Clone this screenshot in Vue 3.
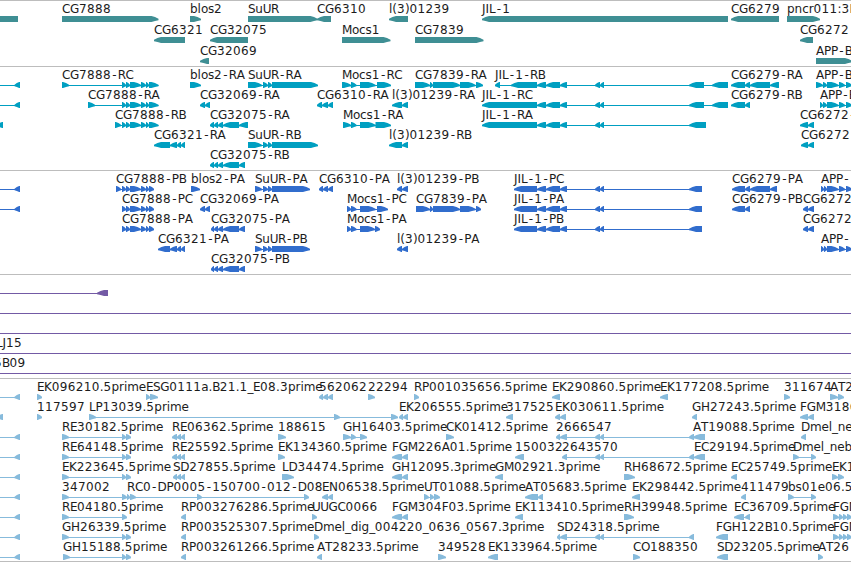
<script setup>
// glyph advances of the label font, digits are 8px
const advances = {
  A: 8, B: 7.5, C: 8, D: 9, E: 7, F: 6.7, G: 9, H: 9, I: 3.5, J: 3.5, K: 7.7, L: 6.5, M: 10,
  N: 9, O: 9, P: 7, R: 7.9, S: 7.2, T: 7.2, U: 8.3,
  a: 7.2, b: 7.6, c: 6.5, d: 7.6, e: 7.3, g: 7.6, i: 3.3, l: 3.3, m: 11.5, n: 7.6, o: 7.1,
  p: 7.6, r: 4.9, s: 6.1, u: 7.5,
  '-': 6.7, '.': 3.8, '_': 5.6, ':': 4, '(': 4.6, ')': 4.6
}

// shared exon blocks
const cg7888 = [[122, 126], [126, 130], [130, 141], [141, 146], [146, 149]]
const jil = [[537, 546], [546, 560], [560, 567], [595, 600], [600, 604]]
const cg32075 = [[214, 218], [218, 223], [223, 239]]
const cg6321 = [[170, 177], [177, 181], [181, 185]]
const suur = [[263, 268], [268, 272]]
const app = [[827, 838.5], [839, 845], [846, 852]]
const re = [[62, 69], [122, 126], [126, 131]]
const fgm = [[833, 839], [839, 843], [843, 847], [847, 852]]
const edge = ['', '<', [[-20, -10], [14.5, 20]]]
const tip = ['', '<', [[-3, 3]]]
const through = ['', '<', [[-20, -10], [860, 870]]]

// feature: [label, strand, exons]
const tracks = [
  {
    name: 'genes',
    rows: [
      [
        ['', '<', [[-20, 18]]],
        ['CG7888', '>', [[62, 158.5]]],
        ['blos2', '>', [[190, 201]]],
        ['SuUR', '>', [[248, 317.5]]],
        ['CG6310', '<', [[317, 331]]],
        ['l(3)01239', '<', [[389, 408]]],
        ['JIL-1', '<', [[482, 728]]],
        ['CG6279', '<', [[731, 779]]],
        ['pncr011:3L', '>', [[787, 820]]]
      ],
      [
        ['CG6321', '<', [[154, 185]]],
        ['CG32075', '<', [[210, 248]]],
        ['Mocs1', '>', [[342, 390.5]]],
        ['CG7839', '>', [[415, 483.5]]],
        ['CG6272', '<', [[800, 813]]]
      ],
      [
        ['CG32069', '<', [[200, 209]]],
        ['APP-B', '>', [[816, 852]]]
      ]
    ]
  },
  {
    name: 'transcripts',
    rows: [
      [
        edge,
        ['CG7888-RC', '>', [[62, 69], ...cg7888, [149, 158.5]]],
        ['blos2-RA', '>', [[190, 201]]],
        ['SuUR-RA', '>', [[248, 262], ...suur, [272, 318]]],
        ['Mocs1-RC', '>', [[342, 351], [351, 356.5], [360, 375.5], [377, 391]]],
        ['CG7839-RA', '>', [[415, 430], [430, 433], [433, 460], [460, 475.5], [476, 483]]],
        ['JIL-1-RB', '<', [[495, 500], [511, 537], ...jil, [689, 704], [712, 728]]],
        ['CG6279-RA', '<', [[731, 745], [745, 750], [750, 770], [770, 779]]],
        ['APP-B', '>', [[816, 823], [823, 827], ...app]]
      ],
      [
        edge,
        ['CG7888-RA', '>', [[88, 95], ...cg7888, [149, 158.5]]],
        ['CG32069-RA', '<', [[200, 205], [205, 210]]],
        ['CG6310-RA', '<', [[317, 322], [322, 328], [328, 333]]],
        ['l(3)01239-RA', '<', [[392, 402], [402, 408]]],
        ['JIL-1-RC', '<', [[482, 537], ...jil, [689, 704], [712, 728]]],
        ['CG6279-RB', '<', [[731, 745], [745, 750]]],
        ['APP-B', '>', [[820, 823], [823, 827], ...app]]
      ],
      [
        tip,
        ['CG7888-RB', '>', [[115, 121], ...cg7888, [149, 158.5]]],
        ['CG32075-RA', '<', [[210, 214], ...cg32075, [239, 248]]],
        ['Mocs1-RA', '>', [[343, 351], [351, 356.5], [360, 375.5], [375.5, 391]]],
        ['JIL-1-RA', '<', [[482, 537], ...jil, [689, 706]]],
        ['CG6272-', '<', [[800, 808], [808, 814]]]
      ],
      [
        ['CG6321-RA', '<', [[154, 170], ...cg6321]],
        ['SuUR-RB', '>', [[248, 262], ...suur, [272, 318]]],
        ['l(3)01239-RB', '<', [[389, 402], [402, 408]]],
        ['CG6272', '<', [[801, 808], [808, 814]]]
      ],
      [
        ['CG32075-RB', '<', [[210, 214], ...cg32075, [239, 245]]]
      ]
    ]
  },
  {
    name: 'proteins',
    rows: [
      [
        edge,
        ['CG7888-PB', '>', [[116, 121], ...cg7888, [149, 154]]],
        ['blos2-PA', '>', [[191, 200]]],
        ['SuUR-PA', '>', [[255, 262], ...suur, [272, 310]]],
        ['CG6310-PA', '<', [[319, 323], [323, 328], [328, 333]]],
        ['l(3)01239-PB', '<', [[397, 402], [402, 408]]],
        ['JIL-1-PC', '<', [[514, 537], ...jil, [689, 702]]],
        ['CG6279-PA', '<', [[732, 745], [745, 750], [750, 770], [770, 777]]],
        ['APP-', '>', [[821, 824], [824, 827], ...app]]
      ],
      [
        edge,
        ['CG7888-PC', '>', [...cg7888, [149, 154]]],
        ['CG32069-PA', '<', [[200, 205], [205, 210]]],
        ['Mocs1-PC', '>', [[347, 351], [351, 356.5], [360, 375.5], [377, 388]]],
        ['CG7839-PA', '>', [[416, 430], [430, 433], [433, 460], [460, 475.5], [476, 481]]],
        ['JIL-1-PA', '<', [[514, 537], ...jil, [689, 702]]],
        ['CG6279-PB', '<', [[732, 745], [745, 750]]],
        ['CG6272', '<', [[803, 808], [808, 814]]]
      ],
      [
        ['CG7888-PA', '>', [...cg7888, [149, 154]]],
        ['CG32075-PA', '<', [[211, 214], ...cg32075, [239, 245]]],
        ['Mocs1-PA', '>', [[347, 351], [351, 356.5], [360, 375], [375, 380]]],
        ['JIL-1-PB', '<', [[514, 537], ...jil, [689, 702]]],
        ['CG6272', '<', [[803, 808], [808, 814]]]
      ],
      [
        ['CG6321-PA', '<', [[158, 170], ...cg6321]],
        ['SuUR-PB', '>', [[255, 262], ...suur, [272, 310]]],
        ['l(3)01239-PA', '<', [[397, 402], [402, 408]]],
        ['APP-', '>', [[821, 824], [824, 827], ...app]]
      ],
      [
        ['CG32075-PB', '<', [[211, 214], ...cg32075, [239, 245]]]
      ]
    ]
  },
  {
    name: 'clones',
    rows: [
      [['', '<', [[-20, -10], [97, 108]]]],
      [through],
      [through],
      [through, ['LJ15', '<', [[-4, -3]]]],
      [through, ['5B09', '<', [[-6, -5]]]]
    ]
  },
  {
    name: 'ests',
    rows: [
      [
        edge,
        ['EK096210.5prime', '>', [[37, 42]]],
        ['ESG0111a.B21.1_E08.3prime', '>', [[146, 150], [150, 158]]],
        ['562062', '<', [[319, 323], [323, 328], [328, 333]]],
        ['22294', '>', [[368, 375]]],
        ['RP001035656.5prime', '>', [[414, 419]]],
        ['EK290860.5prime', '<', [[552, 560]]],
        ['EK177208.5prime', '<', [[660, 668]]],
        ['311674', '>', [[784, 790]]],
        ['AT2', '>', [[830, 838], [838, 844]]]
      ],
      [
        tip,
        ['117597', '>', [[37, 42]]],
        ['LP13039.5prime', '>', [[89, 96], [334, 340], [391, 398]]],
        ['EK206555.5prime', '<', [[399, 403], [403, 408]]],
        ['317525', '<', [[506, 513]]],
        ['EK030611.5prime', '<', [[555, 560], [560, 566]]],
        ['GH27243.5prime', '<', [[692, 697]]],
        ['FGM3186', '<', [[800, 808], [808, 814]]]
      ],
      [
        edge,
        ['RE30182.5prime', '>', re],
        ['RE06362.5prime', '<', [[172, 177], [177, 181], [181, 185]]],
        ['188615', '>', [[278, 286]]],
        ['GH16403.5prime', '>', [[343, 351], [351, 356], [360, 367]]],
        ['CK01412.5prime', '>', [[446, 454]]],
        ['2666547', '<', [[556, 560], [560, 567], [595, 600], [600, 604], [689, 694]]],
        ['AT19088.5prime', '<', [[693, 705]]],
        ['Dmel_ne', '<', [[801, 806]]]
      ],
      [
        edge,
        ['RE64148.5prime', '>', re],
        ['RE25592.5prime', '<', [[172, 177], [177, 181], [181, 185]]],
        ['EK134360.5prime', '>', [[278, 285]]],
        ['FGM226A01.5prime', '<', [[392, 402], [402, 408]]],
        ['150032', '<', [[515, 524]]],
        ['2643570', '<', [[562, 567], [595, 600], [600, 604], [689, 694]]],
        ['EC29194.5prime', '<', [[694, 705]]],
        ['Dmel_neb', '>', [[793, 799], [811, 816]]]
      ],
      [
        edge,
        ['EK223645.5prime', '>', re],
        ['SD27855.5prime', '<', [[173, 177], [177, 181], [181, 185]]],
        ['LD34474.5prime', '>', [[282, 294]]],
        ['GH12095.3prime', '<', [[392, 402], [402, 408]]],
        ['GM02921.3prime', '<', [[495, 503]]],
        ['RH68672.5prime', '>', [[624, 635]]],
        ['EC25749.5prime', '<', [[731, 737]]],
        ['EK1', '>', [[832, 838], [838, 844]]]
      ],
      [
        edge,
        ['347002', '>', [[62, 69], [122, 127]]],
        ['RC0-DP0005-150700-012-D08', '>', [[127, 130], [130, 136], [197, 202], [304, 309]]],
        ['EN06538.5prime', '<', [[322, 328], [328, 333]]],
        ['UT01088.5prime', '>', [[424, 429], [430, 434], [434, 440]]],
        ['AT05683.5prime', '<', [[525, 538], [538, 543]]],
        ['EK298442.5prime', '<', [[632, 640]]],
        ['411479', '<', [[741, 746]]],
        ['bs01e06.5', '>', [[788, 794], [811, 816]]]
      ],
      [
        edge,
        ['RE04180.5prime', '>', [[62, 69], [122, 127]]],
        ['RP003276286.5prime', '<', [[181, 186]]],
        ['UUGC0066', '>', [[312, 317]]],
        ['FGM304F03.5prime', '<', [[392, 402], [402, 408]]],
        ['EK113410.5prime', '<', [[515, 523]]],
        ['RH39948.5prime', '>', [[624, 634]]],
        ['EC36709.5prime', '<', [[734, 744], [745, 750]]],
        ['FGM', '>', fgm]
      ],
      [
        edge,
        ['GH26339.5prime', '>', re],
        ['RP003525307.5prime', '<', [[181, 186]]],
        ['Dmel_dig_004220_0636_0567.3prime', '>', [[314, 319]]],
        ['SD24318.5prime', '<', [[557, 560], [560, 567], [595, 600], [600, 604], [689, 694]]],
        ['FGH122B10.5prime', '<', [[716, 728]]],
        ['FGM', '>', fgm]
      ],
      [
        edge,
        ['GH15188.5prime', '>', [[63, 70], [122, 126], [126, 131]]],
        ['RP003261266.5prime', '<', [[181, 186]]],
        ['AT28233.5prime', '<', [[317, 322]]],
        ['349528', '>', [[438, 446]]],
        ['EK133964.5prime', '<', [[488, 498]]],
        ['CO188350', '>', [[633, 640]]],
        ['SD23205.5prime', '<', [[717, 728]]],
        ['AT26', '>', [[818, 823]]]
      ]
    ]
  }
]

function glyphX(label, start) {
  let x = start
  return [...label].map((ch) => {
    // hyphens sit in the middle of their wide cell
    const at = ch === '-' ? x + 1.2 : x
    x += advances[ch] ?? 8
    return at.toFixed(1)
  }).join(' ')
}

// box with a blunt pointed head on the strand side
function arrow([a, b], strand) {
  const w = b - a
  const head = w < 9 ? w * 0.85 : 7
  const [tail, neck, point] = strand === '>' ? [a, b - head, b] : [b, a + head, a]
  const mid = (neck + point) / 2
  return `M${tail} 15H${neck}L${mid} 16L${point} 17.8V19.2L${mid} 20L${neck} 21H${tail}Z`
}

const shape = (exons, strand) => exons.map((e) => arrow(e, strand)).join('')
</script>

<template>
  <main class="browser">
    <section v-for="track in tracks" :key="track.name" class="track" :class="track.name">
      <svg v-for="(row, i) in track.rows" :key="i" class="row">
        <g v-for="([label, strand, exons], j) in row" :key="j">
          <rect
            v-if="exons.length > 1"
            :x="exons[0][0]"
            y="18"
            :width="exons[exons.length - 1][1] - exons[0][0]"
            height="1"
          />
          <path :d="shape(exons, strand)" />
          <text v-if="label" :x="glyphX(label, exons[0][0])" y="12">{{ label }}</text>
        </g>
      </svg>
    </section>
  </main>
</template>

<style>
body {
  margin: 0;
  background: #fff;
  overflow: hidden;
}
</style>

<style scoped>
.browser {
  display: flex;
  flex-direction: column;
  width: 851px;
  height: 562px;
  box-sizing: border-box;
  overflow: hidden;
  border-bottom: 1px solid #bdbdbd;
}

.track {
  display: flex;
  flex-direction: column;
  flex: none;
  box-sizing: border-box;
  height: 104px;
  border-top: 1px solid #bdbdbd;
}

.row {
  display: block;
  flex: none;
  width: 851px;
  height: 20px;
  overflow: visible;
}

.row text {
  font-family: "DejaVu Sans", sans-serif;
  font-size: 12px;
  fill: #1c1c1c;
}

.genes {
  height: 66px;
  fill: #3f8f94;
}

.genes .row {
  height: 21px;
}

.transcripts {
  fill: #009fc1;
}

.proteins {
  fill: #316dcd;
}

.clones {
  fill: #735aa5;
}

.ests {
  height: 183px;
  fill: #87bbdc;
}
</style>
